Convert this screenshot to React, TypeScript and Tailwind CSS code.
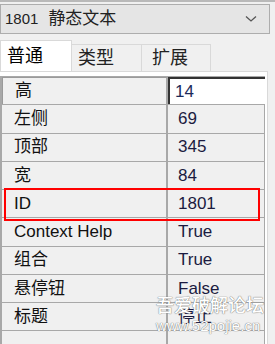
import React from "react";

const rows: [string, string][] = [
  ["高", "14"],
  ["左侧", "69"],
  ["顶部", "345"],
  ["宽", "84"],
  ["ID", "1801"],
  ["Context Help", "True"],
  ["组合", "True"],
  ["悬停钮", "False"],
  ["标题", "停止"],
  ["", ""],
];

const font = { fontFamily: '"Liberation Sans", Arial, "Noto Sans CJK SC", sans-serif' };

export default function App() {
  return (
    <div className="relative w-[275px] h-[344px] overflow-hidden bg-[#f0f0f0] text-[#111]" style={font}>
      <div className="h-[2px] bg-[#b9b9b9]" />
      <div className="mt-[2px] w-[270px] h-[30px] border border-[#adadad] bg-[#e5e5e5] flex items-center justify-between pl-[4px] pr-[12px]">
        <span className="text-[#222] flex items-center">
          <span className="text-[15px]">1801</span>
          <span className="ml-[10px] text-[17px]">静态文本</span>
        </span>
        <svg width="12" height="8" viewBox="0 0 12 8">
          <path d="M1 1.5 L6 6 L11 1.5" fill="none" stroke="#555" strokeWidth="1.3" />
        </svg>
      </div>

      <div className="mt-[6px] flex items-end h-[31px]">
        <div className="w-[72px] h-[31px] bg-white border border-b-0 border-[#d9d9d9] pl-[6px] pt-[2px] text-[18px] leading-[26px] text-black">普通</div>
        <div className="w-[70px] h-[27px] border border-l-0 border-b-0 border-[#d9d9d9] pl-[6px] text-[18px] leading-[26px] text-[#222]">类型</div>
        <div className="w-[69px] h-[27px] border border-l-0 border-b-0 border-[#d9d9d9] pl-[10px] text-[18px] leading-[26px] text-[#222]">扩展</div>
      </div>

      <div className="w-[268px] h-[280px] bg-white border-t border-r border-[#d9d9d9] pt-[4px] pl-0">
        <div className="w-[265px] border-l-2 border-t border-[#a8a8a8] bg-[#f0f0f0]">
          {rows.map(([k, v], i) => (
            <div key={i} className="flex h-[28.25px] border-b border-[#a8a8a8]">
              <div
                className={
                  "w-[166px] shrink-0 pl-[12px] flex items-center text-[17px] border-r-2 border-[#a8a8a8] " +
                  (i === 0 ? "border-t border-l border-t-[#9a9a9a] border-l-[#9a9a9a]" : "")
                }
              >
                {k}
              </div>
              {i === 0 ? (
                <div className="flex-1 bg-white border-t-2 border-l-2 border-[#333] pl-[5px] flex items-center text-[17px] text-[#1b2a5a]">
                  {v}
                </div>
              ) : (
                <div className="flex-1 pl-[10px] flex items-center text-[17px] text-[#1b1b40] border-r border-[#a8a8a8]">
                  {v}
                </div>
              )}
            </div>
          ))}
        </div>
      </div>

      <div className="absolute left-[4px] top-[188px] w-[256px] h-[33px] border-2 border-[#ff0000]" />

      <div className="absolute left-[156px] top-[297px] text-[18px] font-medium text-white leading-none [text-shadow:0_0_1px_#777,0_0_1px_#777]">吾爱破解论坛</div>
      <div className="absolute left-[156px] top-[318px] text-[15px] text-white leading-none [text-shadow:0_0_1px_#777,0_0_1px_#777]">www.52pojie.cn</div>
    </div>
  );
}
